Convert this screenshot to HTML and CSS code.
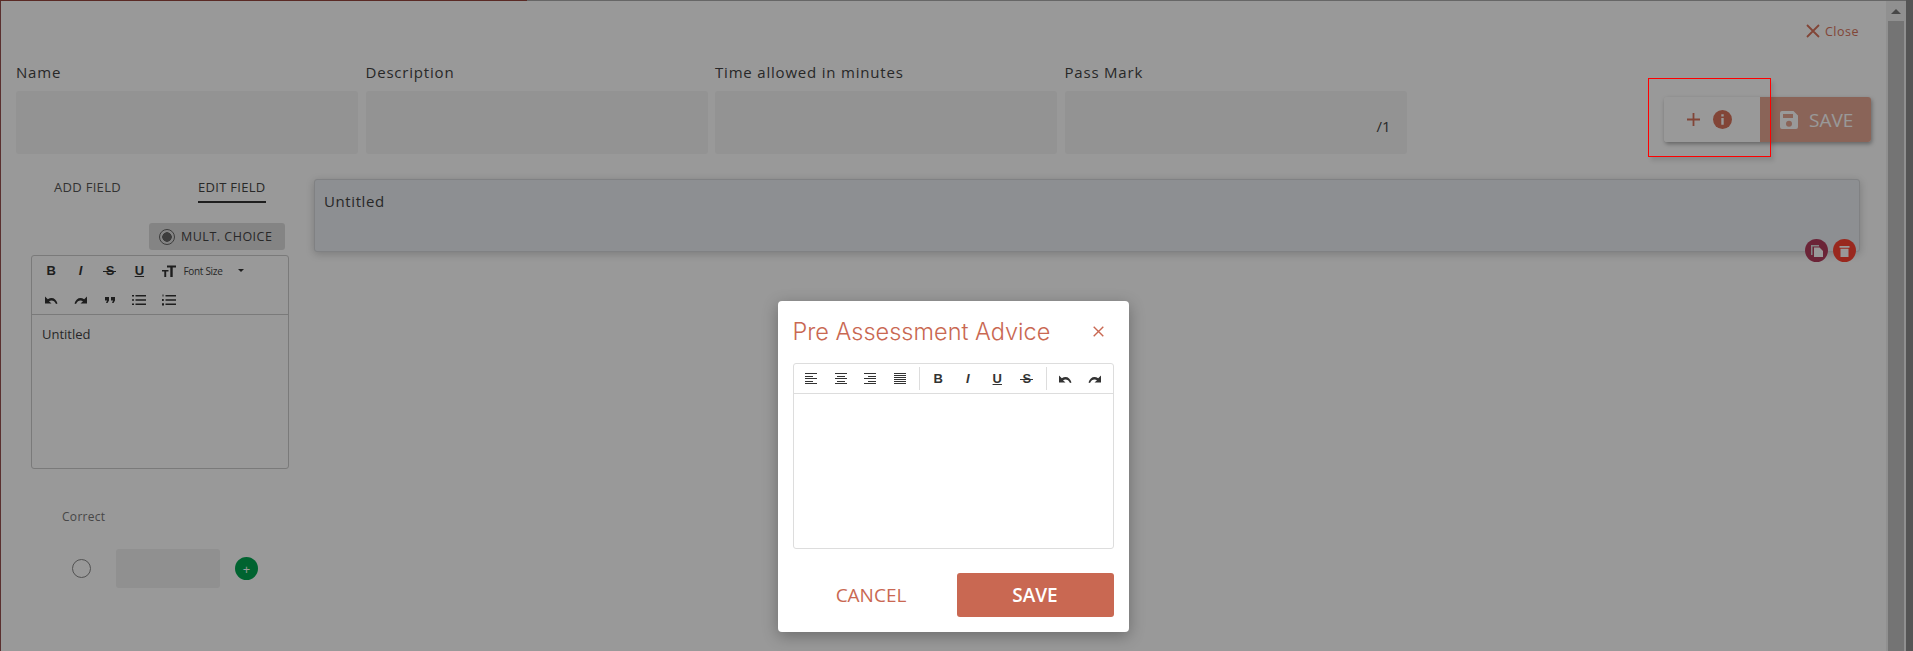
FILE: index.html
```html
<!DOCTYPE html>
<html lang="en">
<head>
  <meta charset="UTF-8" />
  <title>Edit Assessment</title>
  <link rel="stylesheet" href="styles.css">
</head>
<body>

  <svg class="icon-defs" aria-hidden="true">
    <symbol id="i-left" viewBox="0 1 14 11"><path d="M1 1h12v1H1zM1 4h8v1H1zM1 6h12v1H1zM1 9h8v1H1zM1 11h12v1H1z"/></symbol>
    <symbol id="i-center" viewBox="0 1 14 11"><path d="M1 1h12v1H1zM3 4h8v1H3zM1 6h12v1H1zM3 9h8v1H3zM1 11h12v1H1z"/></symbol>
    <symbol id="i-right" viewBox="0 1 14 11"><path d="M1 1h12v1H1zM5 4h8v1H5zM1 6h12v1H1zM5 9h8v1H5zM1 11h12v1H1z"/></symbol>
    <symbol id="i-justify" viewBox="0 1 14 11"><path d="M1 1h12v1H1zM1 3h12v1H1zM1 5h12v1H1zM1 7h12v1H1zM1 9h12v1H1zM1 11h12v1H1z"/></symbol>
    <symbol id="i-undo" viewBox="0 0 14 10"><path d="M1 1.500V8.500H7.500L5 6.200C7.500 4.800 10.500 5.500 12 9L13.500 8.500C12 3.500 8 1.500 3.800 4.200Z"/></symbol>
    <symbol id="i-redo" viewBox="0 0 14 10"><path d="M13 1.500V8.500H6.500L9 6.200C6.500 4.800 3.500 5.500 2 9L.5 8.500C2 3.500 6 1.500 10.200 4.200Z"/></symbol>
    <symbol id="i-quote" viewBox="0 0 12 10"><path d="M1 2h4v3.500L3.500 8H2l1-2.500H1zM7 2h4v3.500L9.500 8H8l1-2.500H7z"/></symbol>
    <symbol id="i-ul" viewBox="0 0 14 12"><path d="M0 1h2v1.500H0zM0 5.200h2v1.500H0zM0 9.500h2V11H0zM3.500 1H14v1.500H3.500zM3.500 5.200H14v1.500H3.500zM3.500 9.500H14V11H3.500z"/></symbol>
    <symbol id="i-ol" viewBox="0 0 14 12"><path d="M0.500 0.500h1v2h-1zM0 5h2v.7H1v.6h1V7H0zM0 9.200h2v2.300H0zM3.500 1H14v1.500H3.500zM3.500 5.200H14v1.500H3.500zM3.500 9.500H14V11H3.500z"/></symbol>
    <symbol id="i-size" viewBox="0 0 14 12"><path d="M5 0.500h9v2h-3.300V12H8.300V2.500H5zM0 5h6.500v1.600H4.200V12H2.300V6.600H0z"/></symbol>
    <symbol id="i-floppy" viewBox="0 0 18 18"><path fill-rule="evenodd" d="M2 0h11.500L18 4.500V16a2 2 0 0 1-2 2H2a2 2 0 0 1-2-2V2a2 2 0 0 1 2-2zM3 3v4h10V3zM9 9.800a3 3 0 1 0 0 6 3 3 0 0 0 0-6z"/></symbol>
  </svg>

  <div class="viewport">
    <div class="app">
      <div class="progress"></div>

      <div class="sheet">
        <div class="close-row">
          <a class="close-link">
            <svg width="14" height="14" viewBox="0 0 14 14"><path d="M1 1l12 12M13 1L1 13" stroke="#d9745c" stroke-width="1.800" fill="none"/></svg>
            Close
          </a>
        </div>

        <div class="fields">
          <div class="field">
            <label>Name</label>
            <div class="input"></div>
          </div>
          <div class="field">
            <label>Description</label>
            <div class="input"></div>
          </div>
          <div class="field">
            <label>Time allowed in minutes</label>
            <div class="input"></div>
          </div>
          <div class="field">
            <label>Pass Mark</label>
            <div class="input pass-input">/1</div>
          </div>

          <div class="actions">
            <button class="btn-add">
              <svg width="15" height="15" viewBox="0 0 15 15"><path d="M7.500 1v13M1 7.500h13" stroke="#d9745c" stroke-width="1.800" fill="none"/></svg>
              <svg width="19" height="19" viewBox="0 0 19 19"><circle cx="9.500" cy="9.500" r="9.500" fill="#d9745c"/><path d="M8.300 4.200h2.400v2.300H8.300zM8.300 8h2.400v6.800H8.300z" fill="#fff"/></svg>
            </button>
            <button class="btn-save">
              <svg class="floppy" width="18" height="18"><use href="#i-floppy"/></svg>
              SAVE
            </button>
          </div>
        </div>

        <div class="workspace">
          <div class="panel">
            <div class="tabs">
              <div class="tab">ADD FIELD</div>
              <div class="tab tab-active">EDIT FIELD</div>
            </div>

            <div class="chip">
              <span class="chip-radio"></span>
              MULT. CHOICE
            </div>

            <div class="editor">
              <div class="side-toolbar">
                <span class="tb tb-text">B</span>
                <span class="tb tb-text tb-italic">I</span>
                <span class="tb tb-text tb-strike">S</span>
                <span class="tb tb-text tb-under">U</span>
                <span class="tb"><svg class="ico" width="14" height="12"><use href="#i-size"/></svg></span>
                <span class="size-label">Font Size</span>
                <span class="size-caret"></span>
                <span class="tb"><svg class="ico" width="14" height="10"><use href="#i-undo"/></svg></span>
                <span class="tb"><svg class="ico" width="14" height="10"><use href="#i-redo"/></svg></span>
                <span class="tb"><svg class="ico" width="12" height="10"><use href="#i-quote"/></svg></span>
                <span class="tb"><svg class="ico" width="14" height="12"><use href="#i-ul"/></svg></span>
                <span class="tb"><svg class="ico" width="14" height="12"><use href="#i-ol"/></svg></span>
              </div>
              <div class="editor-body">Untitled</div>
            </div>

            <div class="correct-label">Correct</div>
            <div class="answer">
              <span class="radio"></span>
              <div class="answer-input"></div>
              <span class="add-answer">+</span>
            </div>
          </div>

          <div class="card">
            Untitled
            <div class="card-tools">
              <span class="round round-copy">
                <svg width="14" height="14" viewBox="0 0 14 14"><path d="M1 1h8v1.500H2.500V11H1z" fill="#ddd"/><path d="M4 3.500h5.500l3.500 3.500v6H4z" fill="#fff"/></svg>
              </span>
              <span class="round round-delete">
                <svg width="11" height="12" viewBox="0 0 11 12"><path d="M0.500 1h10v1.800H.5zM1.500 3.800h8V12h-8z" fill="#fff"/></svg>
              </span>
            </div>
          </div>
        </div>
      </div>

      <div class="scrollbar">
        <span class="scroll-arrow"></span>
        <div class="scroll-thumb"></div>
      </div>
    </div>

    <!-- dialog backdrop -->
    <div class="overlay">
      <div class="modal">
        <div class="modal-head">
          <h2>Pre Assessment Advice</h2>
          <svg width="11" height="11" viewBox="0 0 11 11"><path d="M.7.7l9.600 9.600M10.300.7L.7 10.300" stroke="#c96852" stroke-width="1.400" fill="none"/></svg>
        </div>

        <div class="modal-editor">
          <div class="modal-toolbar">
            <span class="tb-m"><svg class="ico" width="14" height="11"><use href="#i-left"/></svg></span>
            <span class="tb-m"><svg class="ico" width="14" height="11"><use href="#i-center"/></svg></span>
            <span class="tb-m"><svg class="ico" width="14" height="11"><use href="#i-right"/></svg></span>
            <span class="tb-m"><svg class="ico" width="14" height="11"><use href="#i-justify"/></svg></span>
            <span class="sep"></span>
            <span class="tb-m tb-text">B</span>
            <span class="tb-m tb-text tb-italic">I</span>
            <span class="tb-m tb-text tb-under">U</span>
            <span class="tb-m tb-text tb-strike">S</span>
            <span class="sep"></span>
            <span class="tb-m"><svg class="ico" width="14" height="10"><use href="#i-undo"/></svg></span>
            <span class="tb-m"><svg class="ico" width="14" height="10"><use href="#i-redo"/></svg></span>
          </div>
        </div>

        <div class="modal-foot">
          <button class="modal-cancel">CANCEL</button>
          <button class="modal-save">SAVE</button>
        </div>
      </div>
    </div>

    <div class="highlight"></div>
  </div>

  <div class="strip"></div>

</body>
</html>
```

FILE: styles.css
```css
* {
  margin: 0;
  padding: 0;
  box-sizing: border-box;
}

html, body {
  height: 100%;
  overflow: hidden;
}

body {
  display: flex;
  font-family: "Open Sans", sans-serif;
  background: #fff;
  color: #444;
}

button {
  border: none;
  font-family: inherit;
  cursor: pointer;
}

.icon-defs {
  position: absolute;
  width: 0;
  height: 0;
}

.ico {
  fill: #333;
  display: block;
}

.viewport {
  position: relative;
  flex: 1;
  min-width: 0;
}

.strip {
  width: 7px;
  background: #555;
}

.app {
  display: flex;
  height: 100%;
  border-top: 1px solid #aaa;
}

.progress {
  position: absolute;
  top: 0;
  left: 0;
  width: 527px;
  height: 1px;
  background: #96463f;
}

.sheet {
  flex: 1;
  min-width: 0;
  border-left: 1px solid #96504f;
  background: #fff;
}

/* close link */
.close-row {
  display: flex;
  justify-content: flex-end;
  padding: 21px 27px 0 0;
}

.close-link {
  display: flex;
  align-items: center;
  gap: 5px;
  height: 18px;
  font-size: 12.5px;
  letter-spacing: 0.5px;
  color: #d9745c;
}

/* top fields */
.fields {
  display: flex;
  gap: 7.5px;
  margin-top: 22px;
  padding: 0 15px;
}

.field {
  width: 342px;
}

.field label {
  display: block;
  height: 20px;
  margin-bottom: 9px;
  font-size: 15px;
  line-height: 20px;
  letter-spacing: 0.8px;
  color: #444;
}

.input {
  height: 63px;
  background: #f5f5f5;
  border-radius: 3px;
}

.pass-input {
  padding: 25px 16px 0 0;
  text-align: right;
  font-size: 15px;
  line-height: 20px;
}

.actions {
  display: flex;
  margin: 35px 0 0 auto;
  height: 45px;
  box-shadow: 1px 2px 4px rgba(0, 0, 0, 0.35);
  border-radius: 3px;
}

.btn-add {
  display: flex;
  align-items: center;
  justify-content: center;
  gap: 12px;
  width: 96px;
  padding-right: 7px;
  background: #fff;
  border-radius: 3px 0 0 3px;
}

.btn-save {
  display: flex;
  align-items: center;
  gap: 11px;
  width: 111px;
  padding-left: 20px;
  background: #e6a793;
  color: #fff;
  font-size: 19px;
  border-radius: 0 3px 3px 0;
}

.floppy {
  fill: #fff;
}

/* field editor area */
.workspace {
  display: flex;
  align-items: flex-start;
  margin-top: 16px;
  padding-left: 15px;
}

.panel {
  width: 298px;
  flex-shrink: 0;
}

.tabs {
  display: flex;
  gap: 77px;
  padding-left: 38px;
}

.tab {
  padding: 8px 0 7px;
  font-size: 13px;
  line-height: 18px;
  letter-spacing: 0.3px;
  color: #555;
}

.tab-active {
  padding-bottom: 5px;
  border-bottom: 2px solid #333;
  color: #444;
}

.chip {
  display: flex;
  align-items: center;
  gap: 6px;
  width: 136px;
  height: 27px;
  margin: 20px 0 0 133px;
  padding-left: 10px;
  background: #ddd;
  border-radius: 3px;
  font-size: 12.5px;
  letter-spacing: 0.5px;
}

.chip-radio {
  width: 16px;
  height: 16px;
  border: 1.5px solid #666;
  border-radius: 50%;
  background: radial-gradient(circle, #666 0 4.5px, transparent 5px);
}

.editor {
  width: 258px;
  height: 214px;
  margin: 5px 0 0 15px;
  border: 1px solid #ccc;
  border-radius: 3px;
}

.side-toolbar {
  display: grid;
  grid-template-columns: repeat(5, 29.4px) 48px 20px;
  grid-auto-rows: 29px;
  height: 59px;
  padding-left: 4.5px;
  border-bottom: 1px solid #ccc;
}

.tb, .tb-m {
  display: flex;
  align-items: center;
  justify-content: center;
  width: 29.4px;
}

.tb-text {
  font-family: "Liberation Sans", sans-serif;
  font-size: 13px;
  font-weight: bold;
  color: #333;
}

.tb-italic {
  font-style: italic;
}

.tb-strike {
  position: relative;
}

/* wider than the letter, as in the editor's own icon */
.tb-strike::after {
  content: "";
  position: absolute;
  left: 50%;
  top: 50%;
  width: 13px;
  height: 1px;
  margin-left: -6.5px;
  background: #333;
}

.tb-under {
  text-decoration: underline;
}

.size-label {
  align-self: center;
  font-size: 10px;
  letter-spacing: -0.3px;
  color: #444;
}

.size-caret {
  align-self: center;
  justify-self: center;
  width: 0;
  height: 0;
  border: 3.500px solid transparent;
  border-top-color: #333;
  border-bottom: 0;
}

.editor-body {
  padding: 10px 10px 0;
  font-size: 13px;
  line-height: 18px;
}

.correct-label {
  margin: 39px 0 0 46px;
  font-size: 12px;
  line-height: 18px;
  letter-spacing: 0.3px;
  color: #777;
}

.answer {
  display: flex;
  align-items: center;
  height: 39px;
  margin: 23px 0 0 56px;
}

.radio {
  width: 19px;
  height: 19px;
  border: 1.5px solid #888;
  border-radius: 50%;
}

.answer-input {
  width: 104px;
  height: 39px;
  margin-left: 25px;
  background: #f0f0f0;
  border-radius: 3px;
}

.add-answer {
  display: flex;
  align-items: center;
  justify-content: center;
  width: 23px;
  height: 23px;
  margin-left: 15px;
  border-radius: 50%;
  background: #00a651;
  color: #fff;
  font-size: 13px;
}

.card {
  position: relative;
  width: 1546px;
  height: 73px;
  margin-top: 9px;
  padding: 11px 9px 0;
  background: #ebeef3;
  border: 1px solid #d5d7da;
  border-radius: 3px;
  box-shadow: 0 2px 8px rgba(0, 0, 0, 0.2);
  font-size: 15px;
  line-height: 20px;
  letter-spacing: 0.6px;
}

.card-tools {
  position: absolute;
  right: 3px;
  bottom: -11px;
  display: flex;
  gap: 5px;
}

.round {
  display: flex;
  align-items: center;
  justify-content: center;
  width: 23px;
  height: 23px;
  border-radius: 50%;
}

.round-copy {
  background: #b33c5d;
}

.round-delete {
  background: #ff4433;
}

/* scrollbar */
.scrollbar {
  position: relative;
  width: 20px;
  padding: 20px 2px 0;
  background: #f1f1f1;
}

.scroll-arrow {
  position: absolute;
  top: 8px;
  left: 5px;
  width: 0;
  height: 0;
  border: 5px solid transparent;
  border-bottom: 5px solid #777;
  border-top: 0;
}

.scroll-thumb {
  height: 100%;
  background: #c1c1c1;
}

/* modal */
.overlay {
  position: absolute;
  inset: 0;
  display: flex;
  justify-content: center;
  align-items: flex-start;
  padding-top: 301px;
  background: rgba(0, 0, 0, 0.4);
}

.modal {
  width: 351px;
  height: 331px;
  padding: 0 15px;
  background: #fff;
  border-radius: 4px;
  box-shadow: 0 4px 16px rgba(0, 0, 0, 0.3);
}

.modal-head {
  display: flex;
  align-items: center;
  justify-content: space-between;
  height: 62px;
  padding: 0 10px 2px 0;
}

.modal-head h2 {
  font-family: "Inter", sans-serif;
  font-size: 23.5px;
  font-weight: 300;
  color: #c96852;
}

.modal-editor {
  height: 186px;
  border: 1px solid #ddd;
  border-radius: 3px;
}

.modal-toolbar {
  display: flex;
  align-items: center;
  height: 30px;
  padding-left: 3px;
  border-bottom: 1px solid #ddd;
}

.tb-m {
  width: 29.5px;
}

.sep {
  width: 1px;
  height: 23px;
  margin: 0 3.500px 0 4.500px;
  background: #ddd;
}

.modal-foot {
  display: flex;
  gap: 7px;
  margin-top: 24px;
}

.modal-cancel, .modal-save {
  flex: 1;
  height: 44px;
  font-size: 19px;
  border-radius: 3px;
}

.modal-cancel {
  background: #fff;
  color: #c96852;
}

.modal-save {
  background: #c96852;
  color: #fff;
  font-weight: 600;
}

/* annotation box */
.highlight {
  position: absolute;
  top: 78px;
  left: 1648px;
  width: 123px;
  height: 79px;
  border: 1px solid #f00;
  box-shadow: 3px 4px 4px rgba(0, 0, 0, 0.1);
}
```
